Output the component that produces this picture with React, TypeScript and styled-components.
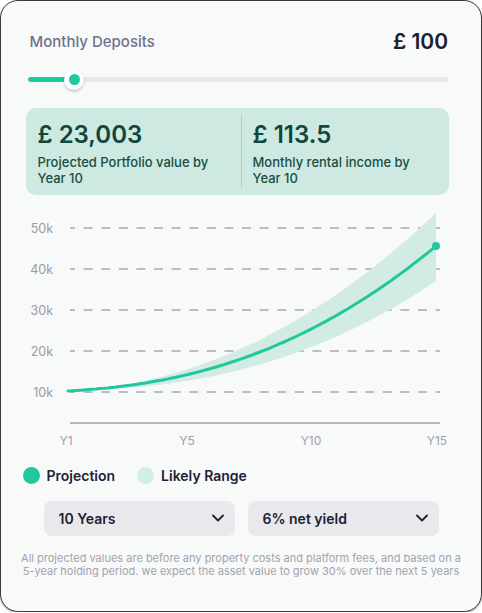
import React from "react";
import styled, { createGlobalStyle } from "styled-components";

const Global = createGlobalStyle`
  html, body { margin: 0; padding: 0; background: #ffffff; }
  body { font-family: "Inter", "Liberation Sans", sans-serif; }
  * { box-sizing: border-box; }
`;

const Card = styled.div`
  width: 482px;
  height: 612px;
  border: 1.5px solid #3a3a3c;
  border-radius: 18px;
  background: #f8f9f9;
  box-shadow: 0 1px 2px rgba(0, 0, 0, 0.35);
  padding-top: 26px;
  display: flex;
  flex-direction: column;
  overflow: hidden;
`;

const Header = styled.div`
  height: 28px;
  padding: 0 33px 0 28.5px;
  display: flex;
  align-items: center;
  justify-content: space-between;
`;

const HeaderLabel = styled.span`
  font-size: 15px;
  font-weight: 500;
  color: #72728a;
`;

const HeaderValue = styled.span`
  font-size: 21px;
  font-weight: 600;
  color: #1a2030;
`;

const SliderWrap = styled.div`
  margin: 14.5px 32.5px 0 26.5px;
  height: 20px;
  position: relative;
  display: flex;
  align-items: center;
`;

const Track = styled.div`
  width: 100%;
  height: 4.5px;
  border-radius: 3px;
  background: #e8e8ed;
  overflow: hidden;
`;

const Fill = styled.div`
  height: 100%;
  background: #1fc89e;
  border-radius: 3px;
`;

const Thumb = styled.div`
  position: absolute;
  top: 0;
  width: 20px;
  height: 20px;
  margin-left: -10px;
  border-radius: 50%;
  background: #ffffff;
  box-shadow: 0 1.5px 3px rgba(0, 0, 0, 0.22);
  display: flex;
  align-items: center;
  justify-content: center;
  &::after {
    content: "";
    width: 11px;
    height: 11px;
    border-radius: 50%;
    background: #1fc89e;
  }
`;

const StatBox = styled.div`
  margin: 18px 32.5px 0 24.5px;
  height: 87px;
  border-radius: 10px;
  background: #cde9e1;
  display: grid;
  grid-template-columns: 215px 1px 1fr;
`;

const Stat = styled.div<{ $pl: number }>`
  padding: 12px 0 0 ${(p) => p.$pl}px;
  color: #134a3d;
`;

const Divider = styled.div`
  margin: 7px 0;
  background: #a7d3c5;
`;

const StatValue = styled.div`
  font-size: 24px;
  line-height: 30px;
  font-weight: 600;
  color: #11473a;
`;

const StatLabel = styled.div`
  margin-top: 4px;
  font-size: 13px;
  line-height: 16px;
  font-weight: 500;
  color: #1b4d41;
`;

const ChartSvg = styled.svg`
  display: block;
  margin-top: 5px;
  width: 479px;
  height: 255px;
  margin-left: -1.5px;
`;

const Legend = styled.div`
  margin: 11px 0 0 21.5px;
  height: 20px;
  display: flex;
  align-items: center;
  gap: 22px;
`;

const LegendItem = styled.div`
  display: flex;
  align-items: center;
  gap: 7px;
  font-size: 14px;
  font-weight: 600;
  color: #1d2233;
`;

const Dot = styled.span<{ $c: string }>`
  width: 17px;
  height: 17px;
  border-radius: 50%;
  background: ${(p) => p.$c};
`;

const DropRow = styled.div`
  margin: 15px auto 0;
  width: 395px;
  display: grid;
  grid-template-columns: 1fr 1fr;
  gap: 13px;
`;

const Dropdown = styled.button`
  height: 35px;
  border: none;
  border-radius: 8px;
  background: #e8e8ed;
  padding: 0 11px 0 15px;
  display: flex;
  align-items: center;
  justify-content: space-between;
  font-family: inherit;
  font-size: 14px;
  font-weight: 600;
  color: #1d2233;
`;

const Footnote = styled.p`
  margin: 16px 0 0;
  padding: 0 16px;
  text-align: center;
  font-size: 11px;
  line-height: 13.5px;
  color: #a3a3ae;
`;

const X0 = 68;
const X1 = 436;
const Y0 = 391;

function curve(a: number, b: number, q: number, fromX = X0, toX = X1, step = 4): [number, number][] {
  const pts: [number, number][] = [];
  const n = Math.ceil(Math.abs(toX - fromX) / step);
  for (let i = 0; i <= n; i++) {
    const x = fromX + ((toX - fromX) * i) / n;
    const u = (x - X0) / (X1 - X0);
    pts.push([x, Y0 - a * (x - X0) - b * Math.pow(u, q)]);
  }
  return pts;
}

const toPath = (pts: [number, number][], move = true) =>
  pts.map((p, i) => `${i === 0 && move ? "M" : "L"}${p[0].toFixed(1)} ${p[1].toFixed(1)}`).join(" ");

const linePts = curve(0.06, 122.9, 2.3);
const topPts = curve(0.06, 156, 2.1);
const botPts = curve(0.03, 99, 2.4, X1, X0);
const bandPath = `${toPath(topPts)} ${toPath(botPts, false)} Z`;
const linePath = toPath(linePts);
const endY = linePts[linePts.length - 1][1];

const grid = [
  { y: 228, label: "50k" },
  { y: 269, label: "40k" },
  { y: 310, label: "30k" },
  { y: 351, label: "20k" },
  { y: 392, label: "10k" },
];

const xLabels = [
  { x: 66, label: "Y1" },
  { x: 187, label: "Y5" },
  { x: 311, label: "Y10" },
  { x: 437, label: "Y15" },
];

const Chevron = () => (
  <svg width="12" height="8" viewBox="0 0 12 8" fill="none">
    <path d="M1 1.5L6 6.5L11 1.5" stroke="#1d2233" strokeWidth="1.8" strokeLinecap="round" strokeLinejoin="round" />
  </svg>
);

const Chart = () => (
  <ChartSvg viewBox="0 200 479 255">
    {grid.map((g) => (
      <g key={g.label}>
        <line x1="70" x2="440" y1={g.y} y2={g.y} stroke="#a8a8b3" strokeWidth="1.5" strokeDasharray="9 8.6" strokeDashoffset="4" />
        <text x="53" y={g.y + 4.5} textAnchor="end" fontSize="12.5" fill="#9a9aa6" fontFamily="Inter, sans-serif">
          {g.label}
        </text>
      </g>
    ))}
    <path d={bandPath} fill="#d2ece4" />
    <path d={linePath} fill="none" stroke="#1fc89e" strokeWidth="3" strokeLinecap="round" strokeLinejoin="round" />
    <circle cx={X1} cy={endY} r="4" fill="#1fc89e" />
    <line x1="70" x2="440" y1="423" y2="423" stroke="#a0a0ab" strokeWidth="1.5" />
    {xLabels.map((l) => (
      <text key={l.label} x={l.x} y="444.5" textAnchor="middle" fontSize="12" fill="#a0a0ab" fontFamily="Inter, sans-serif">
        {l.label}
      </text>
    ))}
  </ChartSvg>
);

export default function App() {
  const sliderPct = 9.3;
  return (
    <>
      <Global />
      <Card>
        <Header>
          <HeaderLabel>Monthly Deposits</HeaderLabel>
          <HeaderValue>£ 100</HeaderValue>
        </Header>
        <SliderWrap>
          <Track>
            <Fill style={{ width: `${sliderPct}%` }} />
          </Track>
          <Thumb style={{ left: `${((73 - 26.5) / 421) * 100}%` }} />
        </SliderWrap>
        <StatBox>
          <Stat $pl={12}>
            <StatValue>£ 23,003</StatValue>
            <StatLabel>
              Projected Portfolio value by
              <br />
              Year 10
            </StatLabel>
          </Stat>
          <Divider />
          <Stat $pl={11}>
            <StatValue>£ 113.5</StatValue>
            <StatLabel>
              Monthly rental income by
              <br />
              Year 10
            </StatLabel>
          </Stat>
        </StatBox>
        <Chart />
        <Legend>
          <LegendItem>
            <Dot $c="#1fc89e" />
            Projection
          </LegendItem>
          <LegendItem>
            <Dot $c="#d3eee6" />
            Likely Range
          </LegendItem>
        </Legend>
        <DropRow>
          <Dropdown>
            10 Years
            <Chevron />
          </Dropdown>
          <Dropdown>
            6% net yield
            <Chevron />
          </Dropdown>
        </DropRow>
        <Footnote>
          All projected values are before any property costs and platform fees, and based on a 5-year holding period. we
          expect the asset value to grow 30% over the next 5 years
        </Footnote>
      </Card>
    </>
  );
}
